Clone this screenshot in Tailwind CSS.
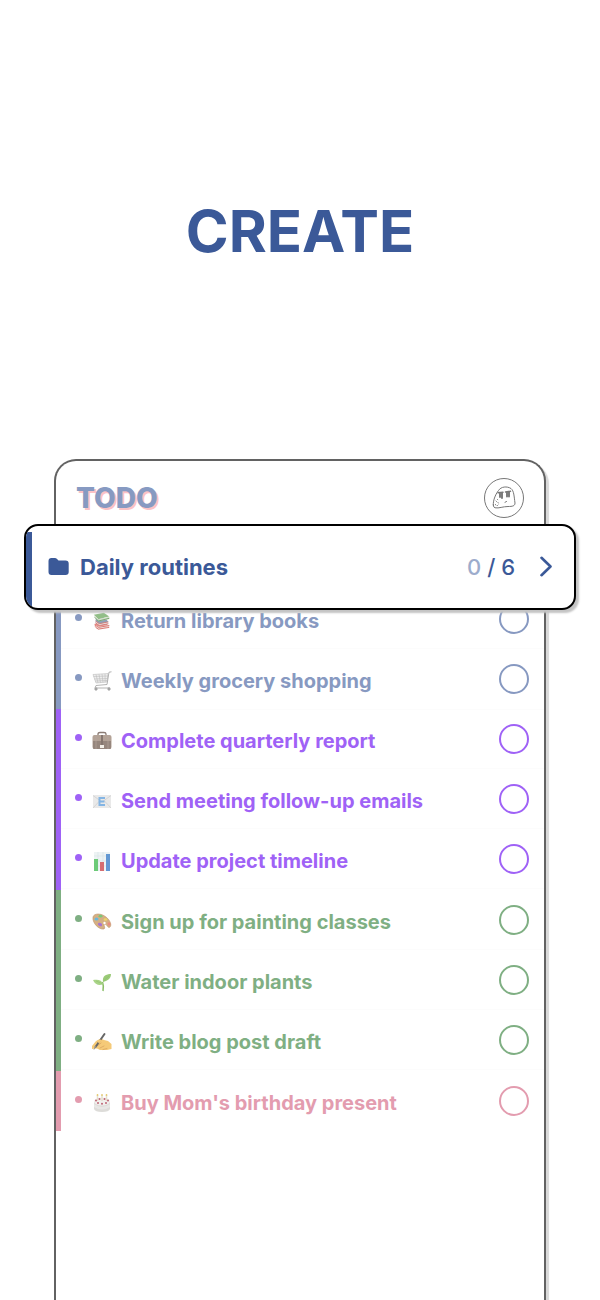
<!DOCTYPE html>
<html lang="en">
<head>
<meta charset="utf-8">
<meta name="viewport" content="width=device-width, initial-scale=1">
<title>Todo</title>
<script src="https://cdn.jsdelivr.net/npm/@tailwindcss/browser@4"></script>
</head>
<body class="bg-white font-['Inter','Noto_Sans',sans-serif]">
<main class="flex min-h-screen flex-col overflow-hidden">
  <h1 class="pt-[196px] text-center text-[58px] leading-[70px] font-bold text-[#3b5998]">CREATE</h1>
  <section class="mx-[54px] mt-[193px] flex grow flex-col rounded-t-[22px] border-2 border-b-0 border-[#626262] bg-white shadow-[3px_3px_1px_#d8d8d8]">
    <header class="flex h-[63px] items-center justify-between px-5 pt-[11px]">
      <h2 class="text-[28px] leading-8 font-extrabold text-[#879ac2] [text-shadow:2px_2px_0_#fbc2c6]">TODO</h2>
      <button type="button" aria-label="Profile" class="size-10 rounded-full border border-[#777]">
        <svg viewBox="0 0 40 40" class="-m-px size-10" fill="none" stroke="#777" stroke-width="1" stroke-linecap="round" stroke-linejoin="round" aria-hidden="true">
          <path d="M9.300 27C9 23 11 17 14.500 12.500C17 8.500 23 8 27 10.500C30 13 30 18 31 25C31 28 28.500 28.500 24 28.500C19 28.500 15 30.500 11 29.800Q9.300 29.500 9.300 27Z"/>
          <path d="M14 14.800L19 14.300M21.500 14L26.500 13.300" stroke-width="1.500"/>
          <path d="M16 15.500v3.500M18 15v5M23 14.500v4M25 14v4.500" stroke-width="1.900"/>
          <path d="M21 24.300L22.500 23.500M12 23l.5.5M14 24.500l.3.500M11.500 26.500l.4.600M13.500 27.500l.5-.5M13.500 21.500l.3.300"/>
        </svg>
      </button>
    </header>

    <a href="#routines" class="relative z-10 -mx-8 -mb-[21px] flex h-[86px] shrink-0 items-center overflow-hidden rounded-[14px] border-2 border-black bg-white text-[#3b5998] shadow-[3px_3px_2px_#c4c4c4]">
      <span class="mt-[6px] w-[6px] self-stretch bg-[#3b5998]"></span>
      <svg viewBox="0 0 22 20" class="ml-4 h-5 w-[22px] shrink-0" fill="currentColor" aria-hidden="true"><path d="M3.500 1H7Q8 1 8.800 1.800L10.500 3.500H17.500Q20.700 3.500 20.700 6.500V15Q20.700 18 17.500 18H3.500Q.5 18 .5 15V4Q.5 1 3.500 1Z"/></svg>
      <span class="ml-[10px] grow text-[22px] leading-7 font-bold">Daily routines</span>
      <span class="text-[22px] leading-7 font-medium"><span class="text-[#9daccc]">0</span> / 6</span>
      <svg viewBox="0 0 14 22" class="mr-[21px] ml-6 h-[22px] w-[14px] shrink-0" fill="none" stroke="currentColor" stroke-width="2.600" stroke-linecap="round" stroke-linejoin="round" aria-hidden="true"><path d="M2.500 1.800L11.500 10.500L2.500 19.200"/></svg>
    </a>

    <ul class="border-l-[5px] border-[#8799c1] text-[#8799c1]">
      <li><label class="flex h-[60px] items-center border-b border-[#fcfcfc] pr-[15px] pl-[14px]">
        <span class="mb-[3px] size-[7px] shrink-0 rounded-full bg-current"></span>
        <svg viewBox="-1 -1 22 22" class="mt-1 ml-[10px] size-5 shrink-0" aria-hidden="true"><path d="M2 13L13 11L18 16L6 19L2 16Z" fill="#e68b87"/><path d="M3 14L6 16L18 14V16L6 19L3 17Z" fill="#eee6e2"/><path d="M2 14L6 17L18 15M3 17L6 19L18 17" stroke="#d9726b" fill="none"/><path d="M3 8L14 7L17 11L7 14L3 12Z" fill="#8da1b6"/><path d="M3 10L7 13L17 11V13L7 15L3 12Z" fill="#ece5e2"/><path d="M3 10L7 13L17 11M3 12L7 15L17 13" fill="none" stroke="#d27a76"/><path d="M1 3L12 1L18 5L6 8Z" fill="#91be87"/><path d="M1 3L6 8L18 5V8L6 10L2 6Z" fill="#d7ddcf"/><path d="M2 6L6 10L18 7" stroke="#70a468" fill="none"/></svg>
        <span class="mt-1 ml-[9px] grow text-[20px] leading-7 font-bold">Return library books</span>
        <input type="checkbox" class="size-[30px] shrink-0 appearance-none rounded-full border-2 border-current checked:bg-current">
      </label></li>
      <li><label class="flex h-[60px] items-center pr-[15px] pl-[14px]">
        <span class="mb-[3px] size-[7px] shrink-0 rounded-full bg-current"></span>
        <svg viewBox="0 0 20 20" class="mt-1 ml-[10px] size-5 shrink-0" fill="none" stroke="#bcbcbc" stroke-width=".6" aria-hidden="true"><path d="M1 3.500L16 2.500L15 11L4 12Z" fill="#eeeeee"/><path d="M1.500 5.500L16 5M2.300 8L15.500 7.500M3.200 10L15.200 9.500M4 3.500L6 12M7 3.300L8.500 11.700M10 3L11 11.500M13 3L13.200 11.300"/><path d="M19.500 .8L17 1.200L15 13.500L4 14.500L3 17H18" stroke="#aaa" stroke-width=".9"/><circle cx="4" cy="18" r="1.400" fill="#999"/><circle cx="17" cy="18" r="1.400" fill="#999"/></svg>
        <span class="mt-1 ml-[9px] grow text-[20px] leading-7 font-bold">Weekly grocery shopping</span>
        <input type="checkbox" class="size-[30px] shrink-0 appearance-none rounded-full border-2 border-current checked:bg-current">
      </label></li>
    </ul>

    <ul class="border-l-[5px] border-[#9f62f6] pb-px text-[#9f62f6]">
      <li><label class="flex h-[60px] items-center border-y border-[#fcfcfc] pr-[15px] pl-[14px]">
        <span class="mb-[3px] size-[7px] shrink-0 rounded-full bg-current"></span>
        <svg viewBox="0 0 20 20" class="mt-1 ml-[10px] size-5 shrink-0" aria-hidden="true"><path d="M6 5V3Q6 1.500 8 1.500H12Q14 1.500 14 3V5" fill="none" stroke="#8b7b74" stroke-width="1.300"/><rect x=".5" y="4" width="19" height="14" rx="2" fill="#b3a296"/><path d="M1 10H19V17Q19 18 18 18H2Q1 18 1 17Z" fill="#96867d"/><path d="M4 4V18M16 4V18" stroke="#b9aaa1" stroke-width=".6"/><path d="M9 4H11V14H9Z" fill="#85766f"/><path d="M8 14H12V17H8Z" fill="#f4f0e9"/></svg>
        <span class="mt-1 ml-[9px] grow text-[20px] leading-7 font-bold">Complete quarterly report</span>
        <input type="checkbox" class="size-[30px] shrink-0 appearance-none rounded-full border-2 border-current checked:bg-current">
      </label></li>
      <li><label class="flex h-[60px] items-center border-b border-[#fcfcfc] pr-[15px] pl-[14px]">
        <span class="mb-[3px] size-[7px] shrink-0 rounded-full bg-current"></span>
        <svg viewBox="0 0 20 20" class="mt-1 ml-[10px] size-5 shrink-0" aria-hidden="true"><rect x="1" y="4" width="18" height="13" rx="1" fill="#e9e9e9"/><path d="M1 4.500L10 11L19 4.500M1 17L7.500 10M19 17L12.500 10" fill="none" stroke="#cfcfcf" stroke-width=".8"/><path d="M13 7H7.500V14H13M7.500 10.500H12.500" fill="none" stroke="#84b5e4" stroke-width="2"/></svg>
        <span class="mt-1 ml-[9px] grow text-[20px] leading-7 font-bold">Send meeting follow-up emails</span>
        <input type="checkbox" class="size-[30px] shrink-0 appearance-none rounded-full border-2 border-current checked:bg-current">
      </label></li>
      <li><label class="flex h-[60px] items-center border-b border-[#fcfcfc] pr-[15px] pl-[14px]">
        <span class="mb-[3px] size-[7px] shrink-0 rounded-full bg-current"></span>
        <svg viewBox="0 0 20 20" class="mt-1 ml-[10px] size-5 shrink-0" aria-hidden="true"><rect x="2" y="1" width="16" height="19" fill="#edf3f4"/><path d="M2 5H18M2 10H18M2 15H18M6 1V20M11 1V20" stroke="#d7e2e5" stroke-width=".6"/><path d="M2 8H6V20H2Z" fill="#6cca78"/><path d="M8 11H12V20H8Z" fill="#d66d70"/><path d="M14 3H18V20H14Z" fill="#6398d3"/></svg>
        <span class="mt-1 ml-[9px] grow text-[20px] leading-7 font-bold">Update project timeline</span>
        <input type="checkbox" class="size-[30px] shrink-0 appearance-none rounded-full border-2 border-current checked:bg-current">
      </label></li>
    </ul>

    <ul class="border-l-[5px] border-[#7faf83] pb-px text-[#7faf83]">
      <li><label class="flex h-[60px] items-center border-b border-[#fcfcfc] pr-[15px] pl-[14px]">
        <span class="mb-[3px] size-[7px] shrink-0 rounded-full bg-current"></span>
        <svg viewBox="0 0 20 20" class="mt-1 ml-[10px] size-5 shrink-0" aria-hidden="true"><path d="M1 5C2 1 9 1 14 5C18 8 20 13 18 15C16 17 15 12 12.500 12C11 13 14 16 12 17C7 18 0 11 1 5Z" fill="#d5af83" stroke="#bd946a" stroke-width=".6"/><ellipse cx="8.500" cy="4.200" rx="2" ry="1.400" fill="#7cc879"/><ellipse cx="4.500" cy="7" rx="2" ry="1.500" fill="#67b8dc"/><ellipse cx="8" cy="12.500" rx="2.200" ry="1.600" fill="#a875d0" transform="rotate(25 8 12.500)"/><ellipse cx="13.500" cy="7.500" rx="1.800" ry="1.300" fill="#ecd56a"/><ellipse cx="17" cy="12" rx="1.500" ry="1.800" fill="#e98b7e"/><circle cx="12.500" cy="11" r="1.200" fill="white"/></svg>
        <span class="mt-1 ml-[9px] grow text-[20px] leading-7 font-bold">Sign up for painting classes</span>
        <input type="checkbox" class="size-[30px] shrink-0 appearance-none rounded-full border-2 border-current checked:bg-current">
      </label></li>
      <li><label class="flex h-[60px] items-center border-b border-[#fcfcfc] pr-[15px] pl-[14px]">
        <span class="mb-[3px] size-[7px] shrink-0 rounded-full bg-current"></span>
        <svg viewBox="0 0 20 20" class="mt-1 ml-[10px] size-5 shrink-0" aria-hidden="true"><path d="M11 19Q12 14 10.500 10" stroke="#89bd65" stroke-width="1.500" fill="none"/><path d="M11 10C10 4 14 2 19 2C19 7 15 9 11 10Z" fill="#9aca77"/><path d="M11 12C8 14 3 13 1 8C6 7 10 8 11 12Z" fill="#a9d487"/><path d="M11.500 9L17 4M10 11.500L4 9" stroke="#8bbd6a" stroke-width=".5"/></svg>
        <span class="mt-1 ml-[9px] grow text-[20px] leading-7 font-bold">Water indoor plants</span>
        <input type="checkbox" class="size-[30px] shrink-0 appearance-none rounded-full border-2 border-current checked:bg-current">
      </label></li>
      <li><label class="flex h-[60px] items-center border-b border-[#fcfcfc] pr-[15px] pl-[14px]">
        <span class="mb-[3px] size-[7px] shrink-0 rounded-full bg-current"></span>
        <svg viewBox="0 0 20 20" class="mt-1 ml-[10px] size-5 shrink-0" aria-hidden="true"><path d="M0 14L4 9L9 6.500L12 8L16 9L19.500 12V17L15 18H8L5 16.500L0 17Z" fill="#f5ca78"/><path d="M5 14L9 11M8 16L12 14M11 17.500L15 16.500" stroke="#d59f5d" stroke-width=".7" stroke-linecap="round"/><path d="M3.500 15L12.500 2" stroke="#666" stroke-width="2" stroke-linecap="round"/><path d="M2 17.500L4 14" stroke="#999" stroke-width="1"/><path d="M5 9Q8 6.500 10 8.500L7 11.500Z" fill="#f5ca78"/></svg>
        <span class="mt-1 ml-[9px] grow text-[20px] leading-7 font-bold">Write blog post draft</span>
        <input type="checkbox" class="size-[30px] shrink-0 appearance-none rounded-full border-2 border-current checked:bg-current">
      </label></li>
    </ul>

    <ul class="border-l-[5px] border-[#e39caf] text-[#e39caf]">
      <li><label class="flex h-[60px] items-center pr-[15px] pl-[14px]">
        <span class="mb-[3px] size-[7px] shrink-0 rounded-full bg-current"></span>
        <svg viewBox="0 0 20 20" class="mt-1 ml-[10px] size-5 shrink-0" aria-hidden="true"><path d="M2 9V16Q3 19 10 19Q17 19 18 16V9Z" fill="#dddcd9"/><ellipse cx="10" cy="8.500" rx="8" ry="4" fill="#f1efed"/><path d="M2 11Q10 17 18 11V14Q10 19 2 14Z" fill="#e8e7e5"/><path d="M5.500 2V8M10 2V8M14.500 2V8" stroke="#e5dfcd" stroke-width="1.500"/><path d="M5.500 1V3M10 1V3M14.500 1V3" stroke="#e6cd78" stroke-width="1.400"/><g fill="#bd6676"><circle cx="4" cy="7.500" r="1"/><circle cx="7.500" cy="6" r="1"/><circle cx="12.500" cy="6" r="1"/><circle cx="16" cy="7.500" r="1"/><circle cx="6" cy="10" r="1"/><circle cx="10" cy="10.800" r="1"/><circle cx="14" cy="10" r="1"/></g></svg>
        <span class="mt-1 ml-[9px] grow text-[20px] leading-7 font-bold">Buy Mom's birthday present</span>
        <input type="checkbox" class="size-[30px] shrink-0 appearance-none rounded-full border-2 border-current checked:bg-current">
      </label></li>
    </ul>
  </section>
</main>
</body>
</html>
